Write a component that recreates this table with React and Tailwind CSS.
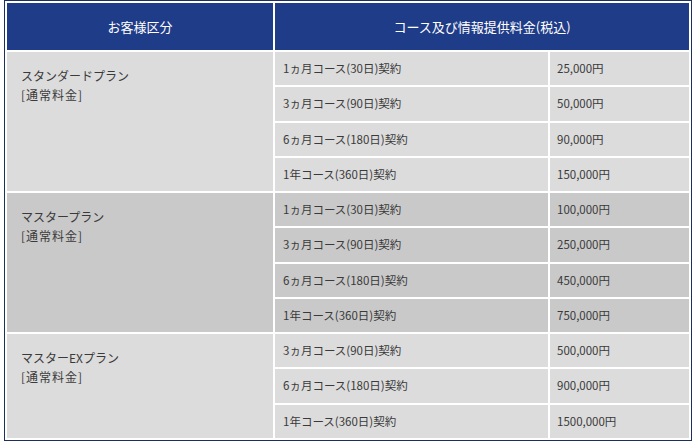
import React from "react";

const plans = [
  {
    name: "スタンダードプラン",
    bg: "bg-[#dcdcdc]",
    courses: [
      ["1ヵ月コース(30日)契約", "25,000円"],
      ["3ヵ月コース(90日)契約", "50,000円"],
      ["6ヵ月コース(180日)契約", "90,000円"],
      ["1年コース(360日)契約", "150,000円"],
    ],
  },
  {
    name: "マスタープラン",
    bg: "bg-[#c9c9c9]",
    courses: [
      ["1ヵ月コース(30日)契約", "100,000円"],
      ["3ヵ月コース(90日)契約", "250,000円"],
      ["6ヵ月コース(180日)契約", "450,000円"],
      ["1年コース(360日)契約", "750,000円"],
    ],
  },
  {
    name: "マスターEXプラン",
    bg: "bg-[#dcdcdc]",
    courses: [
      ["3ヵ月コース(90日)契約", "500,000円"],
      ["6ヵ月コース(180日)契約", "900,000円"],
      ["1年コース(360日)契約", "1500,000円"],
    ],
  },
];

const rowSpan = {
  4: "row-span-4",
  3: "row-span-3",
};

const App = () => {
  return (
    <div
      className="bg-white w-[694px] h-[446px]"
      style={{ fontFamily: '"Noto Sans CJK JP", "Noto Sans", sans-serif' }}
    >
      <div className="ml-[4px] w-[688px] h-[441px] border border-[#1c2f5e] p-[2px] box-border">
        <div className="grid h-full grid-cols-[266px_273px_139px] grid-rows-[47px_repeat(11,minmax(0,1fr))] gap-[2px]">
          <div className="bg-[#1f3c88] text-white text-[13px] flex items-center justify-center">
            お客様区分
          </div>
          <div className="col-span-2 bg-[#1f3c88] text-white text-[13px] flex items-center justify-center">
            コース及び情報提供料金(税込)
          </div>

          {plans.map((plan) => (
            <React.Fragment key={plan.name}>
              <div
                className={`${plan.bg} ${rowSpan[plan.courses.length]} col-start-1 pl-[14px] pt-[14px] text-[12px] leading-[19px] text-[#3a3a3a]`}
              >
                <div>{plan.name}</div>
                <div className="tracking-[1px]">[通常料金]</div>
              </div>
              {plan.courses.map(([course, price]) => (
                <React.Fragment key={course}>
                  <div
                    className={`${plan.bg} col-start-2 flex items-center pl-[8px] text-[11.5px] text-[#3a3a3a]`}
                  >
                    {course}
                  </div>
                  <div
                    className={`${plan.bg} col-start-3 flex items-center pl-[7px] text-[11.5px] text-[#3a3a3a]`}
                  >
                    {price}
                  </div>
                </React.Fragment>
              ))}
            </React.Fragment>
          ))}
        </div>
      </div>
    </div>
  );
};

export default App;
